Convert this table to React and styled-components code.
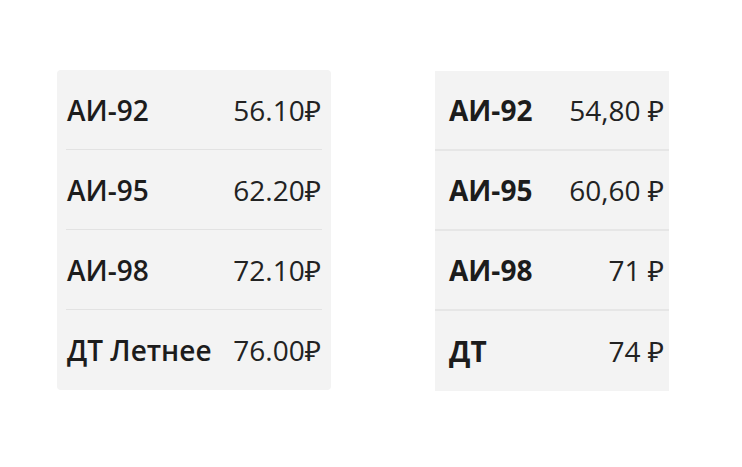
import React from 'react';
import styled, { createGlobalStyle } from 'styled-components';

const GlobalStyle = createGlobalStyle`
    body {
        margin: 0;
        background: #ffffff;
        font-family: 'Open Sans', 'Noto Sans', 'DejaVu Sans', sans-serif;
        color: #1c1c1c;
    }
`;

const left = [
    { name: 'АИ-92', price: '56.10₽' },
    { name: 'АИ-95', price: '62.20₽' },
    { name: 'АИ-98', price: '72.10₽' },
    { name: 'ДТ Летнее', price: '76.00₽' },
];

const right = [
    { name: 'АИ-92', price: '54,80\u00a0₽' },
    { name: 'АИ-95', price: '60,60\u00a0₽' },
    { name: 'АИ-98', price: '71\u00a0₽' },
    { name: 'ДТ', price: '74\u00a0₽' },
];

const App = () => {
    return (
        <>
            <GlobalStyle />
            <Page>
                <RoundCard>
                    {left.map((f, i) => (
                        <InsetRow key={i} last={i === left.length - 1}>
                            <Label>{f.name}</Label>
                            <Price>{f.price}</Price>
                        </InsetRow>
                    ))}
                </RoundCard>
                <FlatCard>
                    {right.map((f, i) => (
                        <FullRow key={i} last={i === right.length - 1}>
                            <Label bold>{f.name}</Label>
                            <Price>{f.price}</Price>
                        </FullRow>
                    ))}
                </FlatCard>
            </Page>
        </>
    );
};

const Page = styled.div`
    display: flex;
    align-items: flex-start;
    gap: 104px;
    padding: 70px 0 0 57px;
`;

const RoundCard = styled.div`
    width: 274px;
    background: #f3f3f3;
    border-radius: 4px;
    padding: 0 9px;
    box-sizing: border-box;
`;

const FlatCard = styled.div`
    width: 234px;
    margin-top: 1px;
    background: #f3f3f3;
`;

const InsetRow = styled.div`
    display: flex;
    align-items: center;
    justify-content: space-between;
    height: 80px;
    box-sizing: border-box;
    padding: 0 1px;
    border-bottom: ${p => (p.last ? 'none' : '1px solid #e2e2e2')};
`;

const FullRow = styled.div`
    display: flex;
    align-items: center;
    justify-content: space-between;
    height: 80px;
    box-sizing: border-box;
    padding: 0 5px 0 14px;
    border-bottom: ${p => (p.last ? 'none' : '2px solid #e6e6e6')};
`;

const Label = styled.span`
    font-size: 28px;
    font-weight: ${p => (p.bold ? 700 : 600)};
    white-space: nowrap;
`;

const Price = styled.span`
    font-size: 28px;
    font-weight: 400;
    color: #222222;
    white-space: nowrap;
`;

export default App;
